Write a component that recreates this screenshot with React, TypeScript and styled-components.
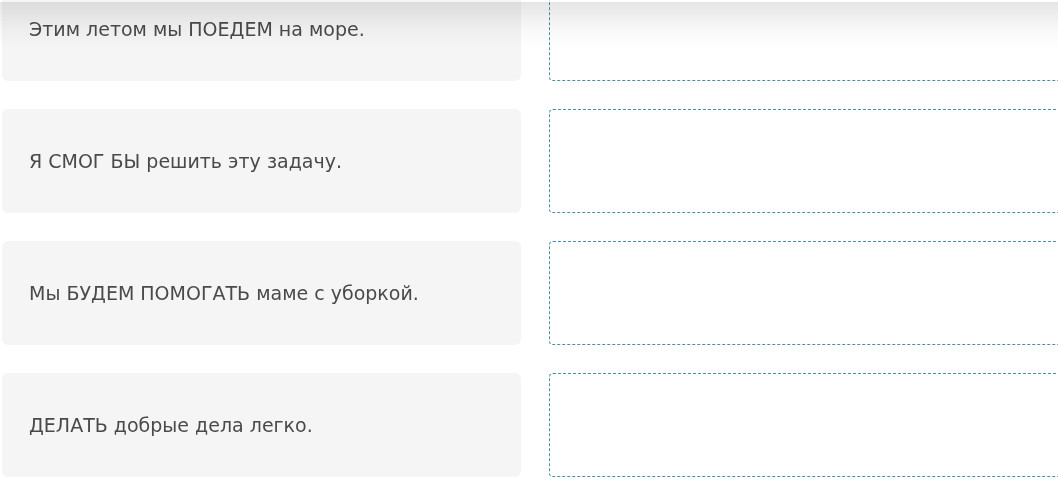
import React from "react";
import styled, { createGlobalStyle } from "styled-components";

const Global = createGlobalStyle`
  html, body { margin: 0; padding: 0; background: #fff; }
  body { font-family: "DejaVu Sans", "Noto Sans", Arial, sans-serif; overflow: hidden; }
`;

const Page = styled.div`
  position: relative;
  width: 1058px;
  height: 493px;
  overflow: hidden;
  background: #fff;
`;

const TopShade = styled.div`
  position: absolute;
  left: 0;
  right: 0;
  top: 2px;
  height: 46px;
  background: linear-gradient(to bottom, rgba(0,0,0,0.1), rgba(0,0,0,0.03) 55%, rgba(0,0,0,0));
  mix-blend-mode: multiply;
  pointer-events: none;
`;

const List = styled.div`
  display: flex;
  flex-direction: column;
  gap: 28px;
  margin-top: -23px;
  padding-left: 2px;
`;

const Row = styled.div`
  display: grid;
  grid-template-columns: 519px 520px;
  column-gap: 28px;
  height: 104px;
`;

const Sentence = styled.div`
  display: flex;
  align-items: center;
  background: #f5f5f5;
  border-radius: 6px;
  padding: 0 27px;
  font-size: 19px;
  color: #4a4a4a;
`;

const DropZone = styled.div`
  border: 1px dashed #4b8fa6;
  border-radius: 4px;
  background: #fff;
`;

const rows = [
  "Этим летом мы ПОЕДЕМ на море.",
  "Я СМОГ БЫ решить эту задачу.",
  "Мы БУДЕМ ПОМОГАТЬ маме с уборкой.",
  "ДЕЛАТЬ добрые дела легко.",
];

export default function App() {
  return (
    <Page>
      <Global />
      <List>
        {rows.map((t) => (
          <Row key={t}>
            <Sentence>{t}</Sentence>
            <DropZone />
          </Row>
        ))}
      </List>
      <TopShade />
    </Page>
  );
}
